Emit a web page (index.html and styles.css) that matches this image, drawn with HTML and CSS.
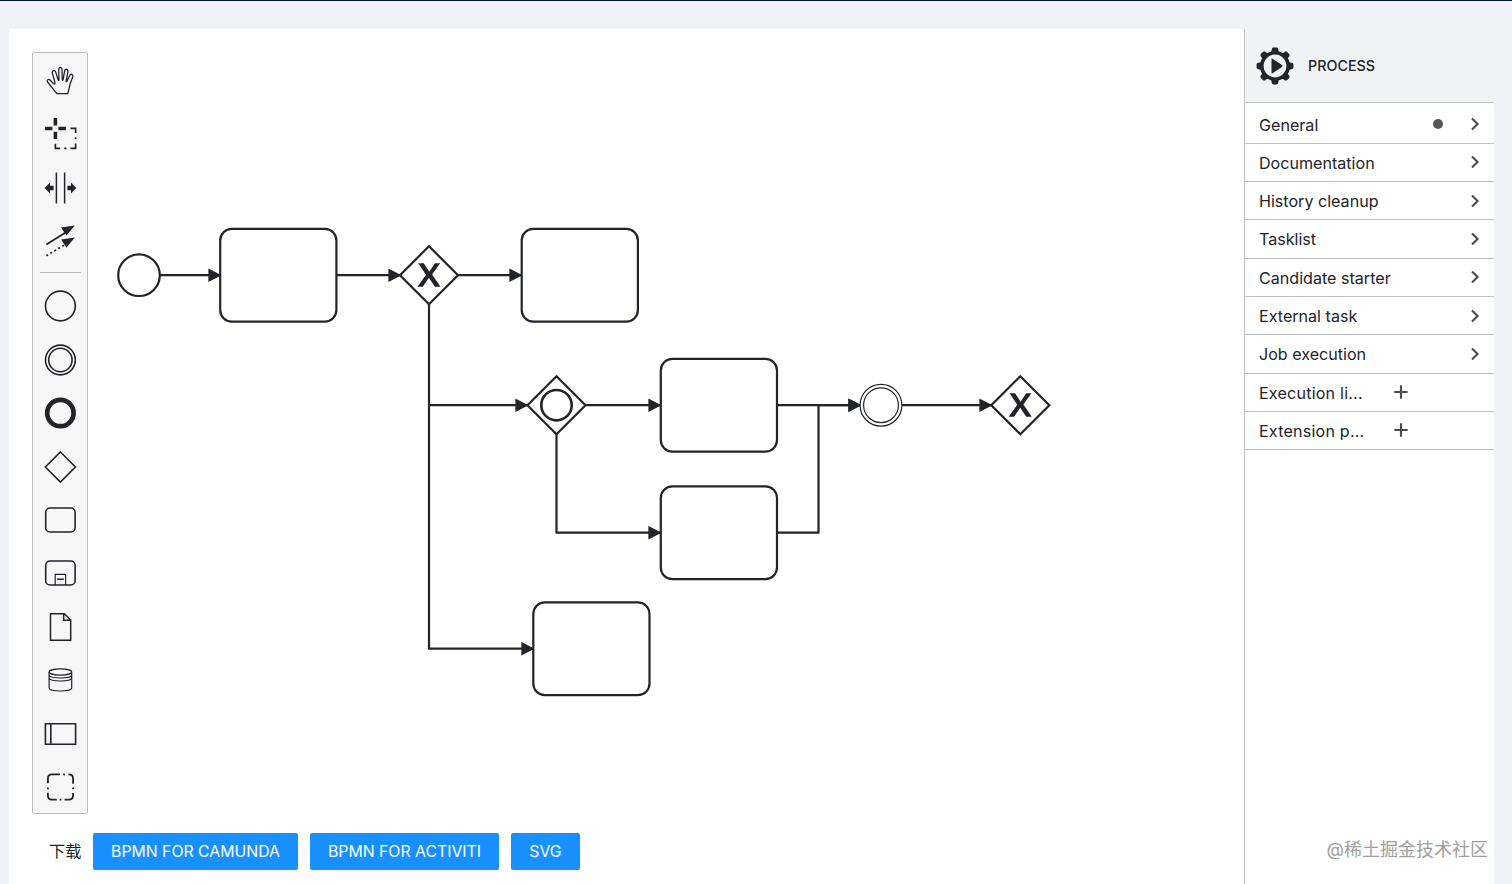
FILE: index.html
```
<!DOCTYPE html>
<html lang="zh">

<head>
    <meta charset="utf-8">
    <title>BPMN Modeler</title>
    <link rel="stylesheet" href="styles.css">
</head>

<body>
    <div class="modeler">
        <main class="workspace">
            <div class="editor">
                <div class="palette">
                    <div class="entry" title="hand tool">
                        <svg viewBox="-20.4 -20 40 40"><path d="M-3.6 12.7H7.4L9.2 5.5C9.4 2.5 11.6-1.6 12.4-4.2C13-6.7 10.2-7.7 9.3-5.4L6.5 .3C5.9 1 5.6 .6 5.7-.2L7.5-9.2C7.8-12.3 4.7-12.6 4.2-9.9L2.7-1.2C2.4-.3 2-.4 1.9-1.3L1.6-11.5C1.4-14.2-1.5-14.2-1.7-11.5L-1.4-1.4C-1.5-.4-2-.4-2.3-1.1L-4.5-8.5C-5.4-11.4-8.7-10.6-8-7.6L-5.4 1.4C-5.3 3-6 3.4-7 2.5L-10.4-1C-12-2.4-14-.7-12.8 1Z" stroke-width="1.3"/></svg>
                    </div>
                    <div class="entry" title="lasso tool">
                        <svg viewBox="-20.4 -20 40 40">
                            <path d="M-15.5-5.5H-8M-2 -5.5H5.5M-5-16V-8.6M-5-2.3V5" stroke-width="3.6"/>
                            <path d="M10-5.6H15.2V-1M15.2 3.3V5M15.2 9.5V14.4H10M6 14.4H3.8M-.3 14.4H-5V9.8" stroke-width="1.7"/>
                        </svg>
                    </div>
                    <div class="entry" title="space tool">
                        <svg viewBox="-20.4 -20 40 40">
                            <path d="M-4-15.5V15.5M4.2-15.5V15.5" stroke-width="1.5"/>
                            <path class="solid" d="M-15.8 0L-10.4-5.4V-2.2H-6.8V2.2H-10.4V5.4ZM16 0L10.6-5.4V-2.2H7V2.2H10.6V5.4Z"/>
                        </svg>
                    </div>
                    <div class="entry" title="connect tool">
                        <svg viewBox="-20.4 -20 40 40">
                            <path d="M-14 3.6L6-9" stroke-width="1.8"/>
                            <path d="M-14 14.7L6 2.8" stroke-width="1.8" stroke-dasharray="2 2.6"/>
                            <path class="solid" d="M14.4-15.5L.6-13.5 6-5.4ZM14.4-3.6L.8-1.6 6 6.8Z"/>
                        </svg>
                    </div>
                    <hr class="separator">
                    <div class="entry" title="start event">
                        <svg viewBox="-20.4 -20 40 40"><circle r="14.9" stroke-width="1.6"/></svg>
                    </div>
                    <div class="entry" title="intermediate event">
                        <svg viewBox="-20.4 -20 40 40"><circle r="14.9" stroke-width="1.6"/><circle r="11.7" stroke-width="1.6"/></svg>
                    </div>
                    <div class="entry" title="end event">
                        <svg viewBox="-20.4 -20 40 40"><circle r="13.2" stroke-width="4.7"/></svg>
                    </div>
                    <div class="entry" title="gateway">
                        <svg viewBox="-20.4 -20 40 40"><path d="M0-15L15 0 0 15-15 0Z" stroke-width="1.6"/></svg>
                    </div>
                    <div class="entry" title="task">
                        <svg viewBox="-20.4 -20 40 40"><rect x="-14.7" y="-12" width="29.4" height="24" rx="4.3" stroke-width="1.6"/></svg>
                    </div>
                    <div class="entry" title="sub process">
                        <svg viewBox="-20.4 -20 40 40">
                            <rect x="-14.7" y="-12" width="29.4" height="24" rx="4.3" stroke-width="1.6"/>
                            <path d="M-5.2 12V1.3H5.2V12" stroke-width="1.2"/>
                            <path d="M-3.2 6.2H3.4" stroke-width="1.5"/>
                        </svg>
                    </div>
                    <div class="entry" title="data object">
                        <svg viewBox="-20.4 -20 40 40"><path d="M-9.9-13.3H4L10.3-7V13.2H-9.9ZM3.3-13.3V-6.7H10.3" stroke-width="1.5"/></svg>
                    </div>
                    <div class="entry" title="data store">
                        <svg viewBox="-20.4 -20 40 40">
                            <ellipse cy="-8" rx="11.3" ry="3.1" stroke-width="1.2"/>
                            <path d="M-11.3-8V8C-11.3 12 11.3 12 11.3 8V-8M-11.3-5C-11.3-1 11.3-1 11.3-5M-11.3-2C-11.3 2 11.3 2 11.3-2" stroke-width="1.2"/>
                        </svg>
                    </div>
                    <div class="entry" title="participant">
                        <svg viewBox="-20.4 -20 40 40"><path d="M-15-10.2H15.2V10.2H-15ZM-9.6-10.2V10.2" stroke-width="1.6"/></svg>
                    </div>
                    <div class="entry" title="group">
                        <svg viewBox="-20.4 -20 40 40"><path d="M-12.5-3.8V-8.5Q-12.5-12.7-8.3-12.7H-.4M2.8-12.7H4.5M8-12.7Q12.7-12.7 12.7-8.5V-3.2M12.7 .6V2.2M12.7 6V8.3Q12.7 12.7 8.3 12.7H4.2M1 12.7H-.7M-3.6 12.7H-8.3Q-12.5 12.7-12.5 8.3V5.7M-12.5 2.2V.6" stroke-width="1.8"/></svg>
                    </div>
                </div>

                <svg class="diagram" viewBox="88 29 1156 785" width="1156" height="785">
                    <defs>
                        <marker id="arrow" viewBox="0 0 13 14" refX="12.6" refY="7" markerWidth="13" markerHeight="14" markerUnits="userSpaceOnUse" orient="auto">
                            <path class="head" d="M0 .2L13 7 0 13.8Z"/>
                        </marker>
                        <path id="xor" class="head" d="M-10.8-11.8H-5.2L.3-3.2 5.9-11.8H11.2L3.1-.4 11.5 11.8H5.9L-.1 2.8-6.2 11.8H-11.6L-3-.2Z"/>
                    </defs>

                    <!-- sequence flows -->
                    <g class="flow">
                        <path d="M160 275.2H221"/>
                        <path d="M337 275.2H401"/>
                        <path d="M458 275.2H522"/>
                        <path d="M429 405.2H528"/>
                        <path d="M429 304V648.7H534"/>
                        <path d="M586 405.2H661"/>
                        <path d="M556.5 434V532.7H661"/>
                        <path d="M777 405.2H861"/>
                        <path d="M777 532.7H818.5V405.2H861"/>
                        <path d="M902 405.2H992"/>
                    </g>

                    <!-- tasks -->
                    <g class="shape">
                        <rect x="220.2" y="228.8" width="116.2" height="92.8" rx="11.6"/>
                        <rect x="521.7" y="228.8" width="116.2" height="92.8" rx="11.6"/>
                        <rect x="660.8" y="358.8" width="116.2" height="92.8" rx="11.6"/>
                        <rect x="660.8" y="486.4" width="116.2" height="92.8" rx="11.6"/>
                        <rect x="533.3" y="602.4" width="116.2" height="92.8" rx="11.6"/>
                    </g>

                    <!-- gateways and events -->
                    <g class="shape">
                        <circle cx="139" cy="275.2" r="20.8"/>
                        <path d="M429 246.2L458 275.2 429 304.2 400 275.2Z"/>
                        <path d="M556.5 376.2L585.5 405.2 556.5 434.2 527.5 405.2Z"/>
                        <circle class="bold" cx="556.5" cy="405.2" r="15.2"/>
                        <circle class="thin" cx="881" cy="405.2" r="20.9"/>
                        <circle class="thin" cx="881" cy="405.2" r="17.4"/>
                        <path d="M1020.3 376.2L1049.3 405.2 1020.3 434.2 991.3 405.2Z"/>
                    </g>
                    <use href="#xor" x="429" y="275"/>
                    <use href="#xor" x="1020.3" y="405"/>
                </svg>
            </div>

            <div class="downloads">
                <span class="label">下载</span>
                <button class="btn camunda">BPMN FOR CAMUNDA</button>
                <button class="btn activiti">BPMN FOR ACTIVITI</button>
                <button class="btn svg">SVG</button>
            </div>
        </main>

        <aside class="properties">
            <header class="header">
                <svg class="gear" viewBox="-19 -19 38 38" width="38" height="38">
                    <path id="tooth" d="M-4-12L-3.2-17Q-2.9-18.4-1.6-18.4H1.6Q2.9-18.4 3.2-17L4-12Z"/>
                    <use href="#tooth" transform="rotate(45)"/>
                    <use href="#tooth" transform="rotate(90)"/>
                    <use href="#tooth" transform="rotate(135)"/>
                    <use href="#tooth" transform="rotate(180)"/>
                    <use href="#tooth" transform="rotate(225)"/>
                    <use href="#tooth" transform="rotate(270)"/>
                    <use href="#tooth" transform="rotate(315)"/>
                    <circle class="ring" r="13.2"/>
                    <path d="M-3.5-6.8Q-3.5-8-2.5-7.3L7-.9Q8 0 7 .9L-2.5 7.3Q-3.5 8-3.5 6.8Z"/>
                </svg>
                <span class="type">PROCESS</span>
            </header>
            <div class="group first">
                <span class="title">General</span>
                <i class="dot"></i>
                <svg class="arrow" viewBox="0 0 10 14"><path d="M2 1.5L7.6 7 2 12.5"/></svg>
            </div>
            <div class="group">
                <span class="title">Documentation</span>
                <svg class="arrow" viewBox="0 0 10 14"><path d="M2 1.5L7.6 7 2 12.5"/></svg>
            </div>
            <div class="group">
                <span class="title">History cleanup</span>
                <svg class="arrow" viewBox="0 0 10 14"><path d="M2 1.5L7.6 7 2 12.5"/></svg>
            </div>
            <div class="group">
                <span class="title">Tasklist</span>
                <svg class="arrow" viewBox="0 0 10 14"><path d="M2 1.5L7.6 7 2 12.5"/></svg>
            </div>
            <div class="group">
                <span class="title">Candidate starter</span>
                <svg class="arrow" viewBox="0 0 10 14"><path d="M2 1.5L7.6 7 2 12.5"/></svg>
            </div>
            <div class="group">
                <span class="title">External task</span>
                <svg class="arrow" viewBox="0 0 10 14"><path d="M2 1.5L7.6 7 2 12.5"/></svg>
            </div>
            <div class="group">
                <span class="title">Job execution</span>
                <svg class="arrow" viewBox="0 0 10 14"><path d="M2 1.5L7.6 7 2 12.5"/></svg>
            </div>
            <div class="group list">
                <span class="title">Execution li...</span>
                <svg class="plus" viewBox="0 0 14 14"><path d="M7 .3V13.7M.3 7H13.7"/></svg>
            </div>
            <div class="group list">
                <span class="title">Extension p...</span>
                <svg class="plus" viewBox="0 0 14 14"><path d="M7 .3V13.7M.3 7H13.7"/></svg>
            </div>
        </aside>
    </div>
    <div class="watermark">@稀土掘金技术社区</div>
</body>

</html>
```
FILE: styles.css
```
* {
    box-sizing: border-box;
}

body {
    margin: 0;
    height: 884px;
    overflow: hidden;
    padding: 28px 18px 0 9px;
    border-top: 1px solid #001529;
    background: #f0f2f5;
    color: #22242a;
    font-family: Inter, "Noto Sans CJK SC", sans-serif;
    font-size: 16.1px;
}

.modeler {
    display: flex;
    height: 856px;
    background: #fff;
}

.workspace {
    width: 1235px;
}

.editor {
    display: flex;
    height: 785px;
    padding-left: 23px;
}

/* tool palette */
.palette {
    flex: none;
    width: 56px;
    height: 762px;
    margin-top: 23px;
    padding-top: 1.2px;
    border: 1px solid #bbb;
    border-radius: 2px;
    background: #f7f7f8;
}

.entry {
    display: flex;
    align-items: center;
    justify-content: center;
    height: 53.4px;
}

.entry svg {
    width: 40px;
    height: 40px;
    fill: none;
    stroke: #22242a;
}

.entry .solid {
    fill: #22242a;
    stroke: none;
}

.separator {
    width: 41px;
    height: 1px;
    margin: 4.6px auto 6.4px 7px;
    border: 0;
    background: #bbb;
}

/* diagram */
.diagram {
    flex: none;
}

.flow {
    fill: none;
    stroke: #22242a;
    stroke-width: 2.2;
    stroke-linejoin: round;
}

.flow path {
    marker-end: url(#arrow);
}

.head {
    fill: #22242a;
    stroke: none;
}

.shape {
    fill: #fff;
    stroke: #22242a;
    stroke-width: 2.2;
}

.shape .thin {
    stroke-width: 1.2;
}

.shape .bold {
    stroke-width: 2.6;
}

/* downloads */
.downloads {
    display: flex;
    align-items: center;
    margin-top: 19px;
    padding-left: 40px;
}

.label {
    width: 44px;
    padding-bottom: 3px;
    font-size: 16.2px;
}

.btn {
    height: 37px;
    margin-right: 12px;
    padding: 0;
    border: 0;
    border-radius: 2px;
    background: #1890ff;
    color: #fff;
    font-family: Inter, sans-serif;
    font-size: 15.8px;
}

.camunda {
    width: 205px;
}

.activiti {
    width: 189px;
}

.btn.svg {
    width: 69px;
}

/* properties panel */
.properties {
    width: 250px;
    border-left: 1px solid #c3c3c5;
}

.header {
    display: flex;
    align-items: center;
    height: 74px;
    padding-left: 11px;
    border-bottom: 1px solid #bdbec1;
    background: #f1f2f4;
}

.gear {
    fill: #22242a;
}

.gear .ring {
    fill: none;
    stroke: #22242a;
    stroke-width: 3.6;
}

.type {
    margin-left: 14px;
    font-size: 14.3px;
    font-weight: 500;
}

.group {
    display: flex;
    align-items: center;
    height: 38.3px;
    padding: 0 14px;
    border-bottom: 1px solid #bdbec1;
}

.group.first {
    height: 40.75px;
    padding-top: 2.5px;
}

.title {
    flex: 1;
    padding-top: 1px;
    white-space: nowrap;
}

.dot {
    width: 10px;
    height: 10px;
    margin-right: 27px;
    border-radius: 50%;
    background: #555658;
}

.arrow,
.plus {
    width: 10px;
    height: 14px;
    fill: none;
    stroke: #4a4b4f;
    stroke-width: 2.1;
}

.list .title {
    flex: none;
    width: 135px;
    letter-spacing: .2px;
}

.plus {
    width: 14px;
}

.watermark {
    position: absolute;
    right: 24px;
    bottom: 21px;
    color: #a0a0a0;
    font-size: 18px;
    line-height: 26px;
}
```
